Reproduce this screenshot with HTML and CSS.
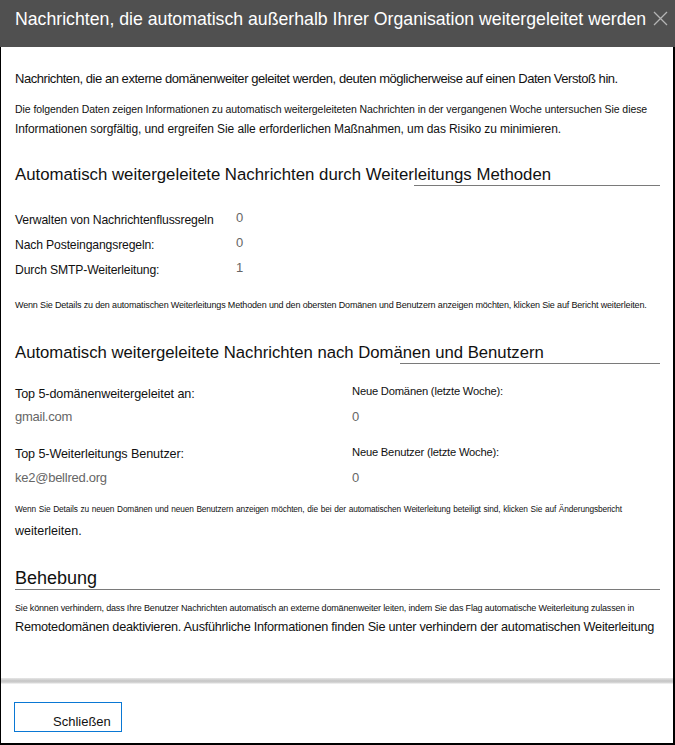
FILE: index.html
```html
<!DOCTYPE html>
<html lang="de">
<head>
<meta charset="utf-8">
<title>Automatisch weitergeleitete Nachrichten</title>
<link rel="stylesheet" href="styles.css">
</head>
<body>
<div class="dialog">
  <header class="dlg-head">
    <h1 class="dlg-title">Nachrichten, die automatisch außerhalb Ihrer Organisation weitergeleitet werden</h1>
    <button class="dlg-close" aria-label="Schließen">
      <svg width="15" height="15" viewBox="0 0 15 15"><path d="M1 1 L14 14 M14 1 L1 14" stroke="#b4b4b4" stroke-width="1.3" fill="none"/></svg>
    </button>
  </header>

  <main class="dlg-body">
    <p class="lead">Nachrichten, die an externe domänenweiter geleitet werden, deuten möglicherweise auf einen Daten Verstoß hin.</p>
    <div class="intro">
      <p class="intro-small">Die folgenden Daten zeigen Informationen zu automatisch weitergeleiteten Nachrichten in der vergangenen Woche untersuchen Sie diese</p>
      <p class="intro-text">Informationen sorgfältig, und ergreifen Sie alle erforderlichen Maßnahmen, um das Risiko zu minimieren.</p>
    </div>

    <section class="section section--methods">
      <h2 class="sec-title sec-title--methods">Automatisch weitergeleitete Nachrichten durch Weiterleitungs Methoden</h2>
      <dl class="methods">
        <dt class="m-label">Verwalten von Nachrichtenflussregeln</dt><dd class="m-value">0</dd>
        <dt class="m-label">Nach Posteingangsregeln:</dt><dd class="m-value">0</dd>
        <dt class="m-label">Durch SMTP-Weiterleitung:</dt><dd class="m-value">1</dd>
      </dl>
      <p class="note note--methods">Wenn Sie Details zu den automatischen Weiterleitungs Methoden und den obersten Domänen und Benutzern anzeigen möchten, klicken Sie auf Bericht weiterleiten.</p>
    </section>

    <section class="section section--domains">
      <h2 class="sec-title sec-title--domains">Automatisch weitergeleitete Nachrichten nach Domänen und Benutzern</h2>
      <div class="domains">
        <div class="d-label">Top 5-domänenweitergeleitet an:</div>
        <div class="d-sublabel">Neue Domänen (letzte Woche):</div>
        <div class="d-value">gmail.com</div>
        <div class="d-value">0</div>
        <div class="d-label d-row--second">Top 5-Weiterleitungs Benutzer:</div>
        <div class="d-sublabel d-row--second">Neue Benutzer (letzte Woche):</div>
        <div class="d-value d-value--second">ke2@bellred.org</div>
        <div class="d-value d-value--second">0</div>
      </div>
      <p class="note note--domains">Wenn Sie Details zu neuen Domänen und neuen Benutzern anzeigen möchten, die bei der automatischen Weiterleitung beteiligt sind, klicken Sie auf Änderungsbericht</p>
      <p class="note-tail">weiterleiten.</p>
    </section>

    <section class="section section--fix">
      <h2 class="sec-title sec-title--fix">Behebung</h2>
      <p class="fix-small">Sie können verhindern, dass Ihre Benutzer Nachrichten automatisch an externe domänenweiter leiten, indem Sie das Flag automatische Weiterleitung zulassen in</p>
      <p class="fix-text">Remotedomänen deaktivieren. Ausführliche Informationen finden Sie unter verhindern der automatischen Weiterleitung</p>
    </section>
  </main>

  <footer class="dlg-foot">
    <button class="btn">Schließen</button>
  </footer>
</div>
</body>
</html>
```

FILE: styles.css
```css
* { box-sizing: border-box; }
html, body { margin: 0; padding: 0; background: #fff; }
body { font-family: "Liberation Sans", Arial, sans-serif; color: #111; }
p, h1, h2, dl, dd, dt { margin: 0; padding: 0; }

.dialog {
  width: 675px;
  height: 745px;
  display: flex;
  flex-direction: column;
  border-left: 1px solid #000;
  border-right: 2px solid #000;
  border-bottom: 2px solid #000;
  background: #fff;
}

.dlg-head {
  height: 47px;
  flex: none;
  background: #505050;
  display: flex;
  align-items: flex-start;
  padding: 9px 0 0 15px;
  margin-left: -1px;
  margin-right: -2px;
}
.dlg-title {
  font-size: 17.7px;
  font-weight: normal;
  line-height: 20px;
  color: #fff;
  white-space: nowrap;
}
.dlg-close {
  margin: 2px 7px 0 auto;
  width: 15px;
  height: 15px;
  padding: 0;
  border: 0;
  background: none;
  display: flex;
}

.dlg-body {
  flex: 1;
  padding: 0 13px 0 14px;
  overflow: hidden;
}

.lead {
  margin-top: 24px;
  font-size: 13px;
  line-height: 16px;
  letter-spacing: -0.45px;
  white-space: nowrap;
}
.intro { margin-top: 15px; }
.intro-small {
  font-size: 10.5px;
  line-height: 14px;
  letter-spacing: -0.07px;
  white-space: nowrap;
}
.intro-text {
  margin-top: 5px;
  font-size: 12px;
  line-height: 16px;
  letter-spacing: -0.1px;
  white-space: nowrap;
}

.sec-title {
  position: relative;
  font-size: 16.8px;
  font-weight: normal;
  line-height: 20px;
  color: #111;
  white-space: nowrap;
}
.sec-title::after {
  content: "";
  position: absolute;
  right: 0;
  bottom: -1px;
  height: 1px;
  background: #7a7a7a;
}
.sec-title--methods { margin-top: 28px; }
.sec-title--methods::after { left: 399px; }
.sec-title--domains { margin-top: 32px; font-size: 16.7px; }
.sec-title--domains::after { left: 385px; }
.sec-title--fix { margin-top: 28px; font-size: 18px; line-height: 22px; }
.sec-title--fix::after { left: 0; }

.methods {
  margin-top: 27px;
  display: grid;
  grid-template-columns: 221px 1fr;
  row-gap: 9px;
}
.m-label {
  font-size: 12.2px;
  line-height: 16px;
  letter-spacing: -0.15px;
  white-space: nowrap;
}
.m-value {
  font-size: 13px;
  line-height: 16px;
  color: #666;
  margin-top: -2px;
}

.note {
  font-size: 9px;
  line-height: 12px;
  white-space: nowrap;
}
.note--methods { margin-top: 21px; letter-spacing: -0.16px; }

.domains {
  margin-top: 23px;
  display: grid;
  grid-template-columns: 337px 1fr;
  grid-auto-rows: 16px;
  row-gap: 7px;
}
.d-label {
  font-size: 12.6px;
  line-height: 16px;
  letter-spacing: -0.1px;
  white-space: nowrap;
}
.d-sublabel {
  font-size: 11.2px;
  line-height: 16px;
  letter-spacing: -0.2px;
  margin-top: -3px;
  white-space: nowrap;
}
.d-row--second { margin-top: 14px; }
.d-sublabel.d-row--second { margin-top: 12px; }
.d-value {
  font-size: 13px;
  line-height: 16px;
  letter-spacing: -0.25px;
  color: #666;
}
.d-value--second { margin-top: 15px; }

.note--domains {
  margin-top: 32px;
  width: 607px;
  font-size: 8.3px;
  letter-spacing: -0.12px;
  text-align: justify;
  text-align-last: justify;
}
.note-tail {
  margin-top: 8px;
  font-size: 12.5px;
  line-height: 16px;
}

.fix-small {
  margin-top: 13px;
  font-size: 9px;
  line-height: 12px;
  letter-spacing: -0.17px;
  white-space: nowrap;
}
.fix-text {
  margin-top: 4px;
  font-size: 12.7px;
  line-height: 18px;
  letter-spacing: -0.25px;
  white-space: nowrap;
}

.dlg-foot {
  flex: none;
  height: 65px;
  padding: 24px 0 0 13px;
  background: linear-gradient(to bottom, #e6e6e6 0, #c4c4c4 3px, #dadada 5px, #fff 6px, #fff 100%);
}
.btn {
  display: block;
  width: 108px;
  height: 30px;
  padding: 9px 0 0 38px;
  border: 1px solid #0a78d4;
  background: #fff;
  font-family: "Liberation Sans", Arial, sans-serif;
  font-size: 13px;
  line-height: 16px;
  color: #111;
  text-align: left;
}
```
